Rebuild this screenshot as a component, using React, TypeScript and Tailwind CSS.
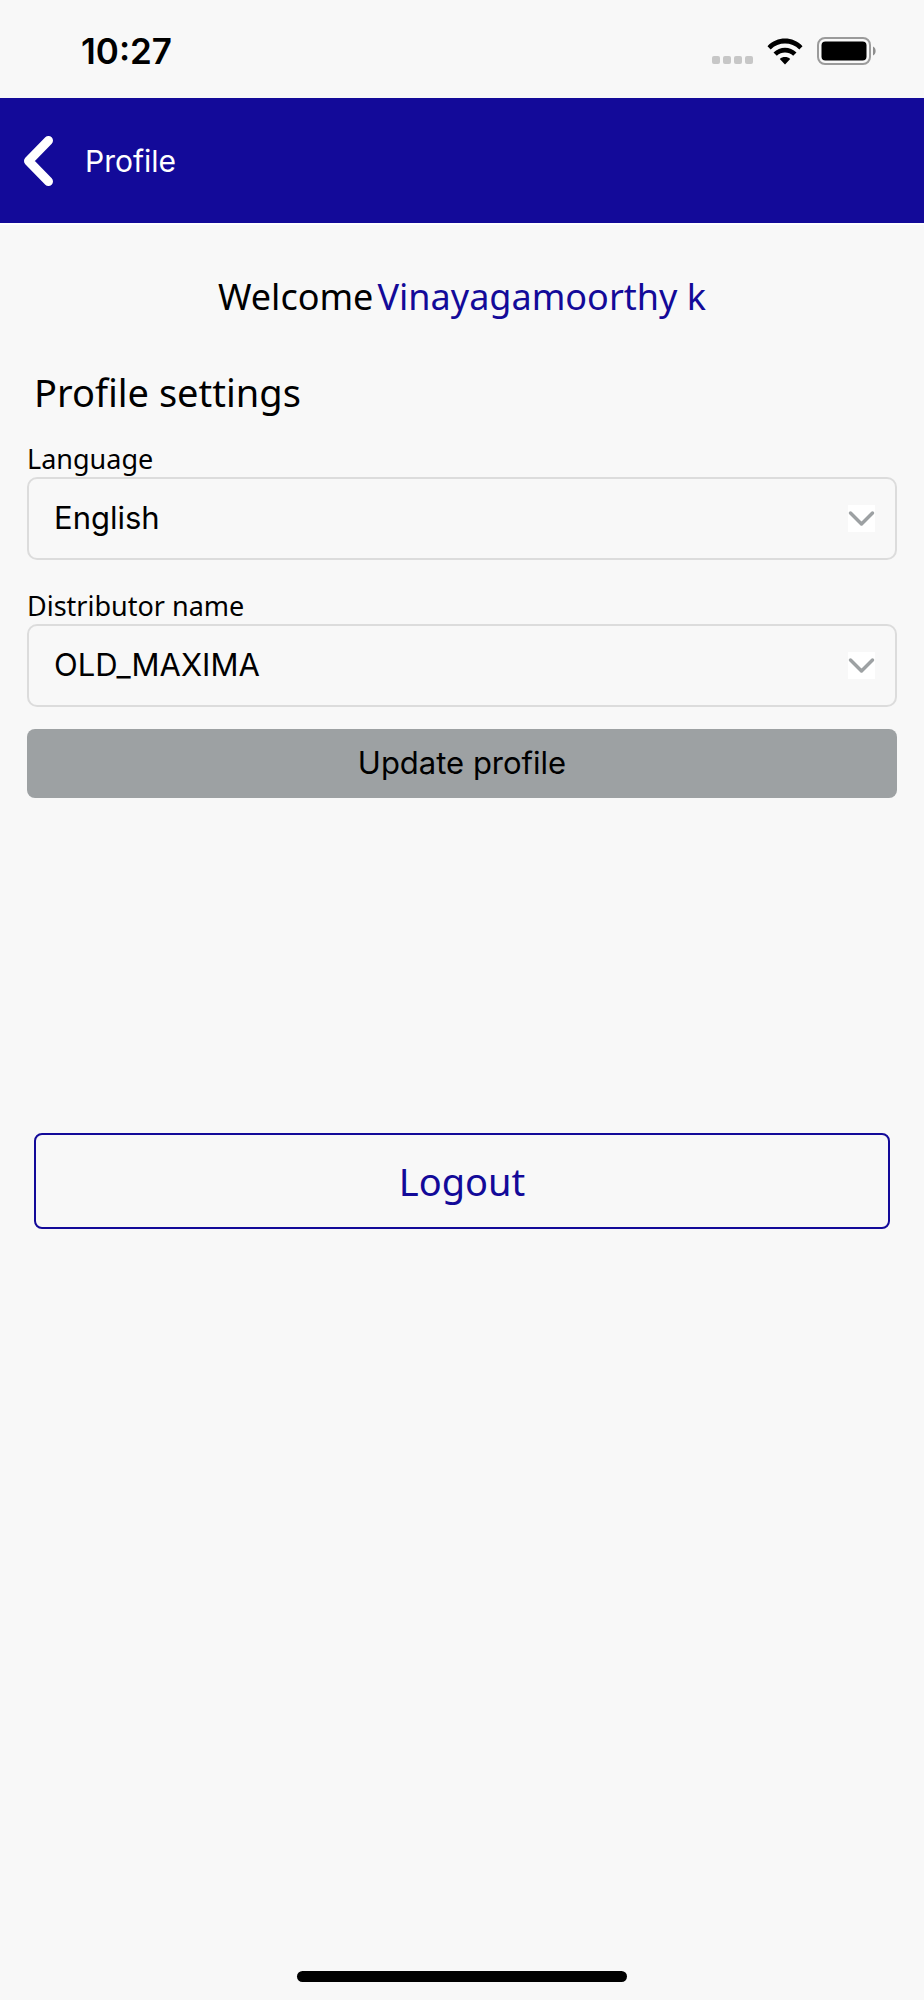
import React, { useState } from 'react';

interface SelectFieldProps {
  id: string;
  label: string;
  value: string;
  options: string[];
  onChange: (value: string) => void;
}

const StatusBar: React.FC = () => (
  <div className="flex h-[98px] items-center justify-between pt-[3px] pl-[81px] pr-12">
    <span className="font-['Inter',sans-serif] text-[35px] leading-10 font-semibold text-black">10:27</span>
    <div className="flex items-end gap-[14px]">
      <div className="flex gap-[3px] pb-px">
        <span className="size-2 rounded-xs bg-[#c7c7c7]" />
        <span className="size-2 rounded-xs bg-[#c7c7c7]" />
        <span className="size-2 rounded-xs bg-[#c7c7c7]" />
        <span className="size-2 rounded-xs bg-[#c7c7c7]" />
      </div>
      <svg width="36" height="27" viewBox="0 0 36 27" aria-label="Wi-Fi">
        <path d="M0.5 8.2C10 -2 26 -2 35.5 8.2L32.3 11.4C24.5 3.6 11.5 3.6 3.7 11.4Z" />
        <path d="M6.5 14.5C13 8 23 8 29.5 14.5L26.2 17.8C21.5 13.4 14.5 13.4 9.8 17.8Z" />
        <path d="M12.8 21C15.500 18.4 20.5 18.4 23.2 21L18 26.5Z" />
      </svg>
      <svg width="59" height="28" viewBox="0 0 59 28" aria-label="Battery">
        <rect x="1" y="1" width="52" height="26" rx="7" fill="none" stroke="#9b9b9b" strokeWidth="2" />
        <rect x="4.500" y="4.500" width="45" height="19" rx="4" />
        <path d="M56 9.5C59.5 11 59.5 17 56 18.5Z" fill="#8e8e8e" />
      </svg>
    </div>
  </div>
);

const SelectField: React.FC<SelectFieldProps> = ({ id, label, value, options, onChange }) => (
  <div>
    <label htmlFor={id} className="block text-[27px] leading-[37px] text-black">
      {label}
    </label>
    <div className="relative">
      <select
        id={id}
        value={value}
        onChange={(e) => onChange(e.target.value)}
        className="block h-[83px] w-full appearance-none rounded-[10px] border-2 border-[#dcdcdc] bg-transparent px-[25px] font-['Inter',sans-serif] text-[31px] text-black"
      >
        {options.map((option) => (
          <option key={option} value={option}>{option}</option>
        ))}
      </select>
      <svg
        className="pointer-events-none absolute inset-y-0 right-[22px] my-auto bg-white"
        width="27"
        height="27"
        viewBox="0 0 27 27"
        fill="none"
        stroke="#9da1a3"
        strokeWidth="3.5"
        strokeLinecap="round"
        strokeLinejoin="round"
      >
        <path d="M2.5 8L13.5 19L24.5 8" />
      </svg>
    </div>
  </div>
);

export default function App() {
  const [language, setLanguage] = useState('English');
  const [distributor, setDistributor] = useState('OLD_MAXIMA');

  return (
    <div className="flex min-h-screen flex-col bg-[#f8f8f8] font-['Noto_Sans',sans-serif]">
      <StatusBar />

      <header className="flex h-[125px] items-center bg-[#130a99] pl-[22px] text-white">
        <button type="button" aria-label="Back">
          <svg
            width="33"
            height="52"
            viewBox="0 0 33 52"
            fill="none"
            stroke="currentColor"
            strokeWidth="9"
            strokeLinecap="round"
            strokeLinejoin="round"
          >
            <path d="M26.5 5.5L6.5 26L26.5 46.5" />
          </svg>
        </button>
        <h1 className="ml-[30px] font-['Inter',sans-serif] text-[30px] leading-10">Profile</h1>
      </header>

      <main className="flex-1 border-t-2 border-white px-[27px] pt-[46px]">
        <p className="flex justify-center gap-1 text-4xl leading-[52px] text-black">
          <span>Welcome</span>
          <span className="text-[#130a99]">Vinayagamoorthy k</span>
        </p>

        <h2 className="mt-[43px] pl-[7px] text-[38px] leading-[52px] text-black">Profile settings</h2>

        <form className="mt-[22px]" onSubmit={(e) => e.preventDefault()}>
          <div className="flex flex-col gap-[27px]">
            <SelectField
              id="language"
              label="Language"
              value={language}
              options={['English', 'Hindi', 'Tamil']}
              onChange={setLanguage}
            />
            <SelectField
              id="distributor"
              label="Distributor name"
              value={distributor}
              options={['OLD_MAXIMA', 'NEW_MAXIMA']}
              onChange={setDistributor}
            />
          </div>
          <button
            type="submit"
            className="mt-[22px] block h-[69px] w-full rounded-lg bg-[#9da1a3] font-['Inter',sans-serif] text-[31px] text-black"
          >
            Update profile
          </button>
        </form>

        <div className="mt-[335px] px-[7px]">
          <button
            type="button"
            className="block h-24 w-full rounded-lg border-2 border-[#130a99] text-[38px] leading-[52px] text-[#130a99]"
          >
            Logout
          </button>
        </div>
      </main>

      <div className="mx-auto mb-[18px] h-[11px] w-[330px] rounded-full bg-black" />
    </div>
  );
}
